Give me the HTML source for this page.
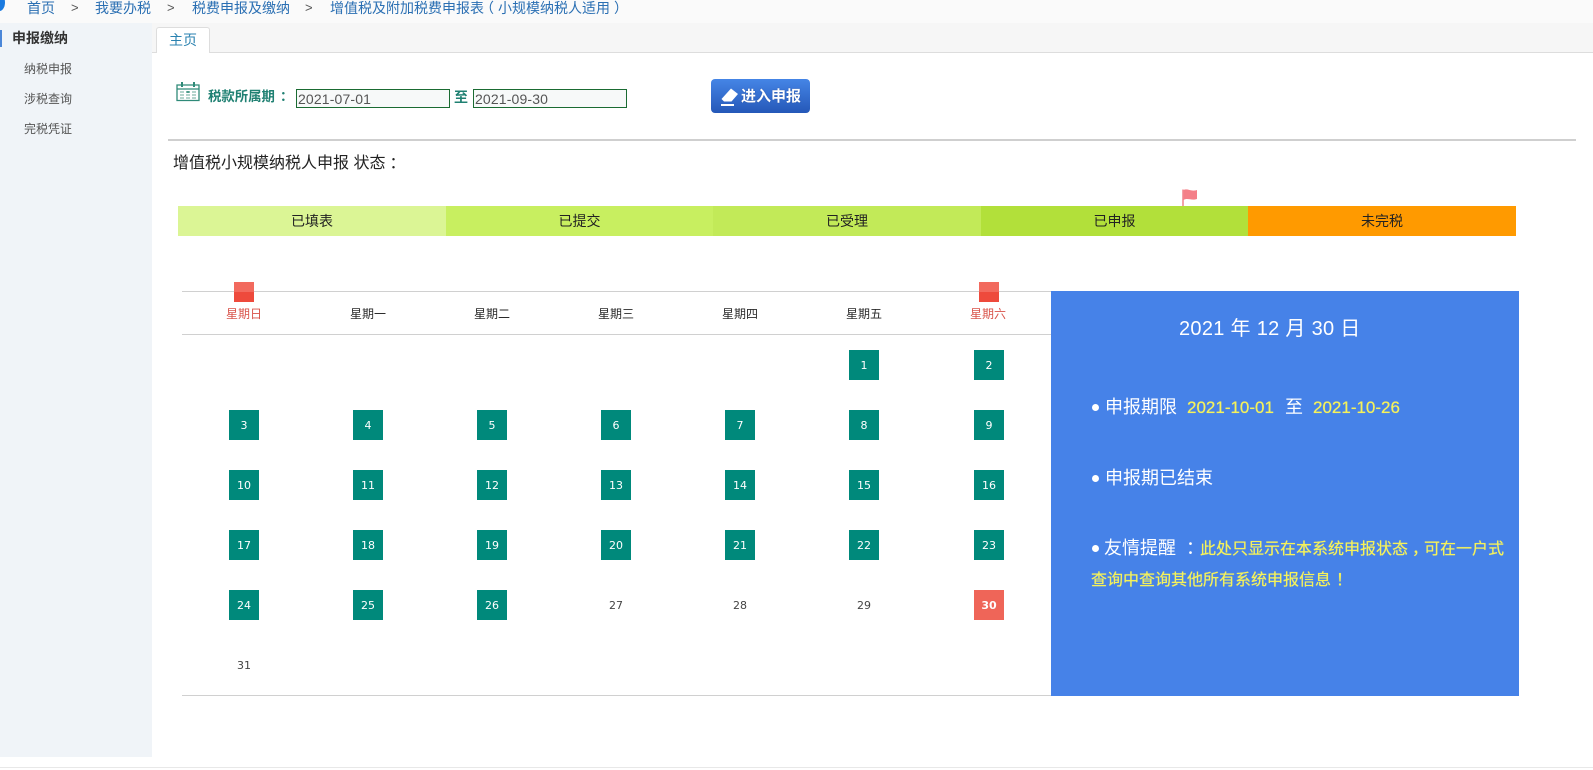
<!DOCTYPE html>
<html lang="zh-CN">
<head>
<meta charset="utf-8">
<title>增值税及附加税费申报表</title>
<style>
html,body{margin:0;padding:0;background:#fff}
body{position:relative;width:1593px;height:770px;overflow:hidden;font-family:"Liberation Sans","Noto Sans CJK SC",sans-serif;color:#222}
.a{position:absolute;white-space:nowrap}
.p{position:relative}
.crumb{color:#2a6fb3;font-size:14px;line-height:18px;top:-1px}
.sep{color:#555;font-size:13px;line-height:18px;top:-1px}
.sub{left:24px;font-size:12px;line-height:16px;color:#555}
.inp{height:17px;width:151px;border:1px solid #1a6b32;background:#f7f9f9;color:#555;font-size:14px;line-height:18px;padding-left:1px;box-sizing:content-box;letter-spacing:.15px}
.seg{top:206px;height:30px;line-height:31px;text-align:center;font-size:14px;color:#222}
.wk{top:306px;width:124px;text-align:center;font-size:12px;line-height:16px;color:#2a2a2a}
.d{width:30px;height:30px;line-height:32px;text-align:center;font-size:11px;color:#fff;background:#00897b;font-family:"DejaVu Sans",sans-serif}
.n{width:30px;height:30px;line-height:32px;text-align:center;font-size:11px;color:#444;font-family:"DejaVu Sans",sans-serif}
.y{color:#f6f25a;text-shadow:0 0 .6px #f6f25a}
</style>
</head>
<body>
<!-- top bar -->
<div class="a" style="left:0;top:0;width:1593px;height:23px;background:#fafafa"></div>
<div class="a" style="left:-6px;top:-6px;width:11px;height:17px;border-radius:50%;background:#1a7ae0"></div>
<span class="a crumb" style="left:27px">首页</span>
<span class="a sep" style="left:71px">&gt;</span>
<span class="a crumb" style="left:95px">我要办税</span>
<span class="a sep" style="left:167px">&gt;</span>
<span class="a crumb" style="left:192px">税费申报及缴纳</span>
<span class="a sep" style="left:305px">&gt;</span>
<span class="a crumb" style="left:330px">增值税及附加税费申报表<span class="p" style="left:-4px">（</span>小规模纳税人适用<span class="p" style="left:4px">）</span></span>

<!-- sidebar -->
<div class="a" style="left:0;top:23px;width:152px;height:734px;background:#f0f4f8"></div>
<div class="a" style="left:0;top:30px;width:2px;height:17px;background:#4a86d8"></div>
<span class="a" style="left:12px;top:29px;font-size:14px;line-height:18px;font-weight:bold;color:#333">申报缴纳</span>
<span class="a sub" style="top:61px">纳税申报</span>
<span class="a sub" style="top:91px">涉税查询</span>
<span class="a sub" style="top:121px">完税凭证</span>

<!-- tabs -->
<div class="a" style="left:152px;top:23px;width:1441px;height:29px;background:#f6f6f6;border-bottom:1px solid #ddd"></div>
<div class="a" style="left:156px;top:27px;width:52px;background:#fff;border:1px solid #ddd;border-bottom:none;border-radius:3px 3px 0 0;box-sizing:content-box;height:25px;text-align:center;font-size:14px;line-height:25px;color:#2a82b0">主页</div>

<!-- period -->
<svg class="a" style="left:176px;top:80px" width="24" height="22" viewBox="0 0 24 22" fill="none" stroke="#2f8a78" stroke-width="1.3">
<path d="M1 5H23V20.5H1Z"/><path d="M1 9H23" stroke-width="1.3"/>
<path d="M6 2V7M18 2V7" stroke-width="2"/>
<path d="M4 12H8M10 12H14M16 12H20M4 15H8M10 15H14M16 15H20M4 18H8M10 18H14M16 18H20" stroke="#9cc6bc" stroke-width="1.5"/>
<path d="M10.5 12H13.5" stroke="#2f8a78" stroke-width="1.6"/>
</svg>
<span class="a" style="left:208px;top:88px;font-size:13.4px;line-height:18px;font-weight:bold;color:#1f8072">税款所属期<span class="p" style="left:5px">：</span></span>
<div class="a inp" style="left:296px;top:89px">2021-07-01</div>
<span class="a" style="left:454px;top:88px;font-size:14px;line-height:18px;font-weight:bold;color:#1f8072">至</span>
<div class="a inp" style="left:473px;top:89px">2021-09-30</div>

<div class="a" style="left:711px;top:79px;width:99px;height:34px;border-radius:4px;background:linear-gradient(#4585e6,#2558b8);border:0"></div>
<svg class="a" style="left:720px;top:87px" width="20" height="22" viewBox="0 0 20 22" fill="#fff">
<path d="M11 1.5L18 7L11.5 14.5H4L1.5 12Z"/>
<path d="M1 17H14V19H1Z"/>
</svg>
<span class="a" style="left:741px;top:88px;font-size:15px;line-height:18px;font-weight:bold;color:#fff;text-shadow:0 0 1px #1c3f88">进入申报</span>

<div class="a" style="left:168px;top:139px;width:1408px;height:2px;background:#cfcfcf"></div>
<span class="a" style="left:173px;top:154px;font-size:16px;line-height:20px;color:#222">增值税小规模纳税人申报 状态<span class="p" style="left:4px">：</span></span>

<!-- flag -->
<svg class="a" style="left:1181px;top:188px" width="18" height="19" viewBox="0 0 18 19">
<path d="M2 1.5V19" stroke="#f28a92" stroke-width="1.6"/>
<path d="M2.5 2C6.5 0 10 4 16 2V11C10.5 13 6.5 9.5 2.5 12Z" fill="#f47f88"/>
</svg>

<!-- status bar -->
<div class="a seg" style="left:178px;width:268px;background:#dbf595">已填表</div>
<div class="a seg" style="left:446px;width:267px;background:#c8ef60">已提交</div>
<div class="a seg" style="left:713px;width:268px;background:#c2ea58">已受理</div>
<div class="a seg" style="left:981px;width:267px;background:#b2e03a">已申报</div>
<div class="a seg" style="left:1248px;width:268px;background:#ff9a00">未完税</div>

<!-- calendar head -->
<div class="a" style="left:182px;top:291px;width:869px;height:1px;background:#d0d0d0"></div>
<div class="a" style="left:182px;top:334px;width:869px;height:1px;background:#d0d0d0"></div>
<div class="a" style="left:182px;top:695px;width:869px;height:1px;background:#d0d0d0"></div>
<div class="a" style="left:234px;top:282px;width:20px;height:20px;background:linear-gradient(#f26a5e 50%,#ee4a3c 50%)"></div>
<div class="a" style="left:979px;top:282px;width:20px;height:20px;background:linear-gradient(#f26a5e 50%,#ee4a3c 50%)"></div>
<span class="a wk" style="left:182px;color:#d9534a">星期日</span>
<span class="a wk" style="left:306px">星期一</span>
<span class="a wk" style="left:430px">星期二</span>
<span class="a wk" style="left:554px">星期三</span>
<span class="a wk" style="left:678px">星期四</span>
<span class="a wk" style="left:802px">星期五</span>
<span class="a wk" style="left:926px;color:#d9534a">星期六</span>

<!-- days -->
<div class="a d" style="left:849px;top:350px">1</div>
<div class="a d" style="left:974px;top:350px">2</div>

<div class="a d" style="left:229px;top:410px">3</div>
<div class="a d" style="left:353px;top:410px">4</div>
<div class="a d" style="left:477px;top:410px">5</div>
<div class="a d" style="left:601px;top:410px">6</div>
<div class="a d" style="left:725px;top:410px">7</div>
<div class="a d" style="left:849px;top:410px">8</div>
<div class="a d" style="left:974px;top:410px">9</div>

<div class="a d" style="left:229px;top:470px">10</div>
<div class="a d" style="left:353px;top:470px">11</div>
<div class="a d" style="left:477px;top:470px">12</div>
<div class="a d" style="left:601px;top:470px">13</div>
<div class="a d" style="left:725px;top:470px">14</div>
<div class="a d" style="left:849px;top:470px">15</div>
<div class="a d" style="left:974px;top:470px">16</div>

<div class="a d" style="left:229px;top:530px">17</div>
<div class="a d" style="left:353px;top:530px">18</div>
<div class="a d" style="left:477px;top:530px">19</div>
<div class="a d" style="left:601px;top:530px">20</div>
<div class="a d" style="left:725px;top:530px">21</div>
<div class="a d" style="left:849px;top:530px">22</div>
<div class="a d" style="left:974px;top:530px">23</div>

<div class="a d" style="left:229px;top:590px">24</div>
<div class="a d" style="left:353px;top:590px">25</div>
<div class="a d" style="left:477px;top:590px">26</div>
<div class="a n" style="left:601px;top:590px">27</div>
<div class="a n" style="left:725px;top:590px">28</div>
<div class="a n" style="left:849px;top:590px">29</div>
<div class="a d" style="left:974px;top:590px;background:#ef6558;font-weight:bold">30</div>

<div class="a n" style="left:229px;top:650px">31</div>

<!-- info panel -->
<div class="a" style="left:1051px;top:291px;width:468px;height:405px;background:#4682e8"></div>
<span class="a" style="left:1179px;top:317px;font-size:20px;line-height:24px;letter-spacing:.3px;color:#fff">2021 年 12 月 30 日</span>

<div class="a" style="left:1092px;top:404px;width:7px;height:7px;border-radius:50%;background:#fff"></div>
<span class="a" style="left:1105px;top:396px;font-size:18px;line-height:22px;color:#fff">申报期限</span>
<span class="a y" style="left:1187px;top:397px;font-size:17px;line-height:22px">2021-10-01</span>
<span class="a" style="left:1285px;top:396px;font-size:18px;line-height:22px;color:#fff">至</span>
<span class="a y" style="left:1313px;top:397px;font-size:17px;line-height:22px">2021-10-26</span>

<div class="a" style="left:1092px;top:475px;width:7px;height:7px;border-radius:50%;background:#fff"></div>
<span class="a" style="left:1105px;top:467px;font-size:18px;line-height:22px;color:#fff">申报期已结束</span>

<div class="a" style="left:1092px;top:545px;width:7px;height:7px;border-radius:50%;background:#fff"></div>
<span class="a" style="left:1104px;top:537px;font-size:18px;line-height:22px;color:#fff">友情提醒</span>
<span class="a" style="left:1186px;top:537px;font-size:18px;line-height:22px;color:#fff">：</span>
<span class="a y" style="left:1200px;top:539px;font-size:16px;line-height:22px">此处只显示在本系统申报状态<span class="p" style="left:4px">，</span>可在一户式</span>
<span class="a y" style="left:1091px;top:570px;font-size:16px;line-height:22px">查询中查询其他所有系统申报信息<span class="p" style="left:5px">！</span></span>

<!-- footer line -->
<div class="a" style="left:0;top:767px;width:1593px;height:1px;background:#e8e8e8"></div>
</body>
</html>
